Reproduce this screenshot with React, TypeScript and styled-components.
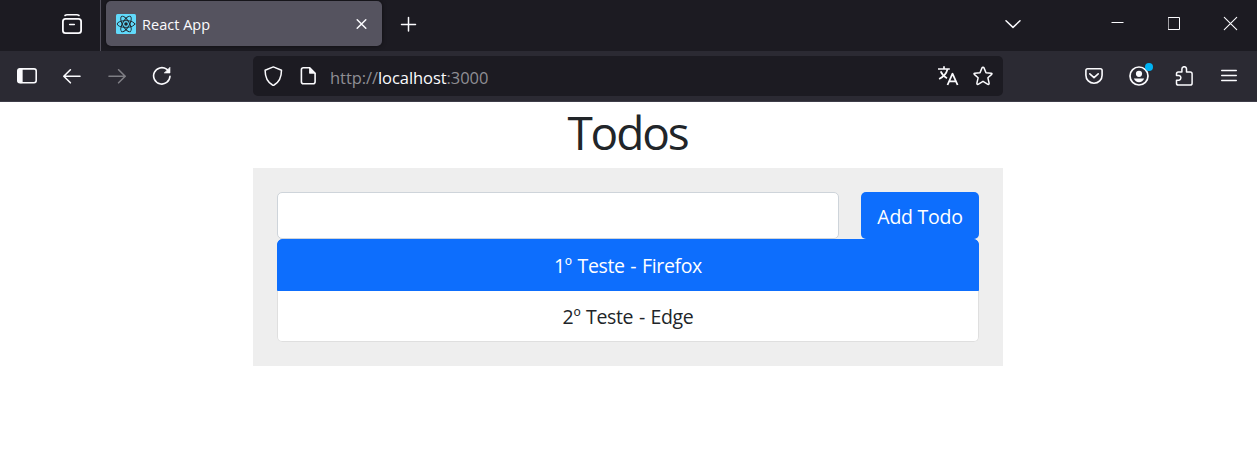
import React from "react";
import styled, { createGlobalStyle } from "styled-components";

const GlobalStyle = createGlobalStyle`
  * { box-sizing: border-box; }
  body {
    margin: 0;
    background: #fff;
    color: #212529;
    font-family: "Open Sans", "Noto Sans", sans-serif;
  }
  svg { display: block; flex: none; fill: none; stroke: #fbfbfe; stroke-width: 1.6; stroke-linecap: round; stroke-linejoin: round; }
`;

const TabStrip = styled.header`
  display: flex;
  align-items: flex-start;
  height: 51px;
  background: #1c1b22;
`;

const TabOverview = styled.div`
  display: flex;
  align-items: center;
  width: 101px;
  height: 51px;
  padding: 0 0 3px 60px;
  border-right: 1px solid #52505c;
`;

const Tab = styled.div`
  display: flex;
  align-items: center;
  width: 276px;
  height: 45px;
  margin: 1px 0 0 5px;
  padding: 0 8px 0 10px;
  border-radius: 5px;
  background: #55535f;
  box-shadow: 0 0 4px rgba(0, 0, 0, 0.5);
`;

const TabTitle = styled.span`
  flex: 1;
  margin: 2px 0 0 6px;
  color: #fbfbfe;
  font-size: 14.5px;
  letter-spacing: 0.02px;
  line-height: 20px;
`;

const StripButton = styled.div<{ $width: number }>`
  display: flex;
  align-items: center;
  justify-content: center;
  width: ${(p) => p.$width}px;
  height: 47px;
`;

const WindowControls = styled.div`
  display: flex;
  margin-left: auto;
`;

const Toolbar = styled.nav`
  display: flex;
  align-items: center;
  height: 51px;
  padding: 0 6px 1px 4px;
  border-bottom: 1px solid #3e3d48;
  background: #2b2a33;
`;

const ButtonGroup = styled.div<{ $end?: boolean }>`
  display: flex;
  margin-left: ${(p) => (p.$end ? "auto" : 0)};
`;

const ToolButton = styled.div<{ $dim?: boolean }>`
  position: relative;
  display: flex;
  align-items: center;
  justify-content: center;
  width: 45px;
  height: 40px;
  padding-left: 1px;
  opacity: ${(p) => (p.$dim ? 0.4 : 1)};
`;

const Notice = styled.i`
  position: absolute;
  top: 7px;
  left: 29px;
  width: 8px;
  height: 8px;
  border-radius: 50%;
  background: #00b3f4;
`;

const AddressBar = styled.div`
  display: flex;
  align-items: center;
  width: 750px;
  height: 40px;
  margin-left: 69px;
  padding: 0 3px 0 2px;
  border-radius: 5px;
  background: #1c1b22;
`;

const AddressIcon = styled.div`
  display: flex;
  align-items: center;
  justify-content: center;
  width: 35px;
  height: 40px;
`;

const Address = styled.span`
  flex: 1;
  margin: 4px 0 0 5px;
  color: #8f8e94;
  font-size: 16.5px;
  letter-spacing: -0.06px;
  line-height: 22px;
  b { color: #fbfbfe; font-weight: 400; }
`;

const Page = styled.main`
  width: 750px;
  margin: 0 auto;
  position: relative;
  left: -0.5px;
`;

const Heading = styled.h1`
  margin: 0;
  height: 66px;
  font-size: 46px;
  font-weight: 400;
  letter-spacing: -2.1px;
  line-height: 60px;
  text-align: center;
  text-indent: -1px;
`;

const Panel = styled.section`
  height: 198px;
  padding: 24px;
  background: #eee;
`;

const Form = styled.form`
  display: flex;
  justify-content: space-between;
`;

const TodoInput = styled.input`
  width: 562px;
  height: 47px;
  padding: 7px 14px;
  border: 1px solid #ced4da;
  border-radius: 5px;
  outline: none;
  background: #fff;
  font: 19px "Open Sans", sans-serif;
`;

const AddButton = styled.button`
  width: 118px;
  height: 47px;
  padding: 1px 0 0;
  border: 0;
  border-radius: 5px;
  background: #0d6efd;
  color: #fff;
  font: 19.5px "Open Sans", sans-serif;
  letter-spacing: -0.25px;
  white-space: nowrap;
`;

const TodoList = styled.ul`
  margin: 0;
  padding: 0;
  list-style: none;
  border-radius: 5px;
  overflow: hidden;
`;

const TodoItem = styled.li<{ $active?: boolean }>`
  height: ${(p) => (p.$active ? 52 : 51)}px;
  border: 1px solid ${(p) => (p.$active ? "#0d6efd" : "#dfdfdf")};
  border-top-width: ${(p) => (p.$active ? 1 : 0)}px;
  border-radius: ${(p) => (p.$active ? "5px 5px 0 0" : "0 0 5px 5px")};
  background: ${(p) => (p.$active ? "#0d6efd" : "#fff")};
  color: ${(p) => (p.$active ? "#fff" : "#212529")};
  font-size: 19.5px;
  letter-spacing: -0.35px;
  word-spacing: 1px;
  line-height: 51px;
  text-align: center;
`;

const Icon = ({ size = 20, children }: { size?: number; children: React.ReactNode }) => (
  <svg width={size} height={size} viewBox={`0 0 ${size} ${size}`}>{children}</svg>
);

const ReactLogo = () => (
  <svg width="20" height="20" viewBox="0 0 20 20">
    <rect width="20" height="20" rx="1.5" fill="#61dafb" stroke="none" />
    <g stroke="#20252b" strokeWidth="0.9">
      <ellipse cx="10" cy="10" rx="8.8" ry="3.4" />
      <ellipse cx="10" cy="10" rx="8.8" ry="3.4" transform="rotate(60 10 10)" />
      <ellipse cx="10" cy="10" rx="8.8" ry="3.4" transform="rotate(120 10 10)" />
    </g>
    <circle cx="10" cy="10" r="1.8" fill="#20252b" stroke="none" />
  </svg>
);

const todos = ["1º Teste - Firefox", "2º Teste - Edge"];

export default function App() {
  return (
    <>
      <GlobalStyle />
      <TabStrip>
        <TabOverview>
          <svg width="24" height="24" viewBox="0 0 24 24">
            <path d="M5 3.5Q6 2.8 7 2.8H17Q18 2.8 19 3.5" />
            <rect x="2.9" y="6.9" width="18.2" height="14.2" rx="2.6" strokeWidth="1.8" />
            <path d="M9.7 12.5H14.3" />
          </svg>
        </TabOverview>
        <Tab>
          <ReactLogo />
          <TabTitle>React App</TabTitle>
          <svg width="25" height="24" viewBox="0 0 25 24" strokeLinecap="butt">
            <path d="M8.2 7.7L16.8 16.3M16.8 7.7L8.2 16.3" strokeWidth="1.5" />
          </svg>
        </Tab>
        <StripButton $width={53}>
          <svg width="17" height="17" viewBox="0 0 17 17">
            <path d="M8.5 2.5V16.1M1.5 9.4H15.5" strokeWidth="1.5" />
          </svg>
        </StripButton>
        <WindowControls>
          <StripButton $width={72}>
            <Icon><path d="M3 6.8L10 13.4L17 6.8" strokeWidth="1.5" /></Icon>
          </StripButton>
          <StripButton $width={40} />
          <StripButton $width={57}>
            <svg width="13" height="13" viewBox="0 0 13 13"><path d="M1 5.5H12" strokeWidth="1" strokeLinecap="square" /></svg>
          </StripButton>
          <StripButton $width={57}>
            <svg width="13" height="13" viewBox="0 0 13 13"><rect x="0.5" y="0.5" width="11" height="12" strokeWidth="1" /></svg>
          </StripButton>
          <StripButton $width={54}>
            <svg width="15" height="15" viewBox="0 0 15 15"><path d="M1.3 1.3L13.7 13.7M13.7 1.3L1.3 13.7" strokeWidth="1.1" /></svg>
          </StripButton>
        </WindowControls>
      </TabStrip>
      <Toolbar>
        <ButtonGroup>
          <ToolButton>
            <Icon>
              <rect x="0.8" y="2.9" width="18.4" height="13.8" rx="2.2" />
              <path d="M3 2.9H5.2V16.7H3Q.9 16.7 .9 14.5V5.1Q.9 2.9 3 2.9Z" fill="#fbfbfe" strokeWidth=".8" />
            </Icon>
          </ToolButton>
          <ToolButton>
            <Icon><path d="M18 10.3H2M8.4 3.8L1.8 10.3L8.4 16.8" /></Icon>
          </ToolButton>
          <ToolButton $dim>
            <Icon><path d="M2 10.3H18M11.6 3.8L18.2 10.3L11.6 16.8" /></Icon>
          </ToolButton>
          <ToolButton>
            <Icon>
              <path d="M18 10.3A8.2 8.2 0 1 1 14.6 3.2L16 4.5" />
              <path d="M18 1.5V7H12.5Z" fill="#fbfbfe" strokeWidth=".6" />
            </Icon>
          </ToolButton>
        </ButtonGroup>
        <AddressBar>
          <AddressIcon>
            <Icon>
              <path d="M10.3 .9L18.5 4.2C18.5 11.5 16.3 16 11.1 19Q10.3 19.4 9.5 19C4.3 16 2.1 11.5 2.1 4.2Z" strokeWidth="1.5" />
            </Icon>
          </AddressIcon>
          <AddressIcon>
            <Icon>
              <path d="M11.7 1.8H5.4Q3.4 1.8 3.4 3.8V15.8Q3.4 17.8 5.4 17.8H15.1Q17.1 17.8 17.1 15.8V7.2Z" />
              <path d="M11.5 2V7.3H17Z" fill="#fbfbfe" strokeWidth=".8" />
            </Icon>
          </AddressIcon>
          <Address>http://<b>localhost</b>:3000</Address>
          <AddressIcon>
            <svg width="22" height="22" viewBox="0 0 22 22">
              <g strokeLinecap="butt">
                <path d="M1 4H12.8M7 1.3V4M10.5 4.2C9.5 8.3 6 12 2.1 14M3.7 6.4C5 9.5 7.5 11.9 10 13.2" strokeWidth="1.7" />
                <path d="M10.5 20L15.5 8.7L20.6 20M12.1 16.3H19" strokeWidth="1.8" />
              </g>
            </svg>
          </AddressIcon>
          <AddressIcon>
            <Icon>
              <path d="M10 1.2Q10.7 1.2 11 1.9L13 6.7L18.2 7.2Q19.5 7.4 18.7 8.4L14.9 11.8L16.1 17.2Q16.2 18.8 14.9 18.3L10 15.3L5.1 18.3Q3.8 18.8 3.9 17.2L5.1 11.8L1.3 8.4Q.5 7.4 1.8 7.2L7 6.7L9 1.9Q9.3 1.2 10 1.2Z" strokeWidth="1.5" />
            </Icon>
          </AddressIcon>
        </AddressBar>
        <ButtonGroup $end>
          <ToolButton>
            <Icon>
              <path d="M3.6 2.8H16.4Q18.1 2.8 18.1 4.5V9.2A8.1 8.1 0 0 1 1.9 9.2V4.5Q1.9 2.8 3.6 2.8Z" />
              <path d="M5.8 7.8L10 11.7L14.2 7.8" />
            </Icon>
          </ToolButton>
          <ToolButton>
            <Icon>
              <circle cx="10" cy="10" r="9" strokeWidth="1.7" />
              <circle cx="10" cy="7.8" r="3.1" fill="#fbfbfe" stroke="none" />
              <path d="M4.8 12.6H15.2C14.2 15.1 12.4 16.2 10 16.2S5.8 15.1 4.8 12.6Z" fill="#fbfbfe" stroke="none" />
            </Icon>
            <Notice />
          </ToolButton>
          <ToolButton>
            <Icon>
              <path d="M4.3 19.1Q2.5 19.1 2.5 17.2V14.2H5A2.4 2.4 0 0 0 5 9.5H2.5V7.9Q2.5 6 4.3 6H7.9V3A2.3 2.3 0 0 1 12.5 3V6H16.2Q18.1 6 18.1 7.9V17.2Q18.1 19.1 16.2 19.1Z" strokeWidth="1.5" />
            </Icon>
          </ToolButton>
          <ToolButton>
            <Icon><path d="M2.7 4.5H17.3M2.7 9.5H17.3M2.7 14.5H17.3" strokeWidth="1.4" /></Icon>
          </ToolButton>
        </ButtonGroup>
      </Toolbar>
      <Page>
        <Heading>Todos</Heading>
        <Panel>
          <Form onSubmit={(e) => e.preventDefault()}>
            <TodoInput type="text" aria-label="Todo" />
            <AddButton type="submit">Add Todo</AddButton>
          </Form>
          <TodoList>
            {todos.map((todo, i) => (
              <TodoItem key={todo} $active={i === 0}>{todo}</TodoItem>
            ))}
          </TodoList>
        </Panel>
      </Page>
    </>
  );
}
